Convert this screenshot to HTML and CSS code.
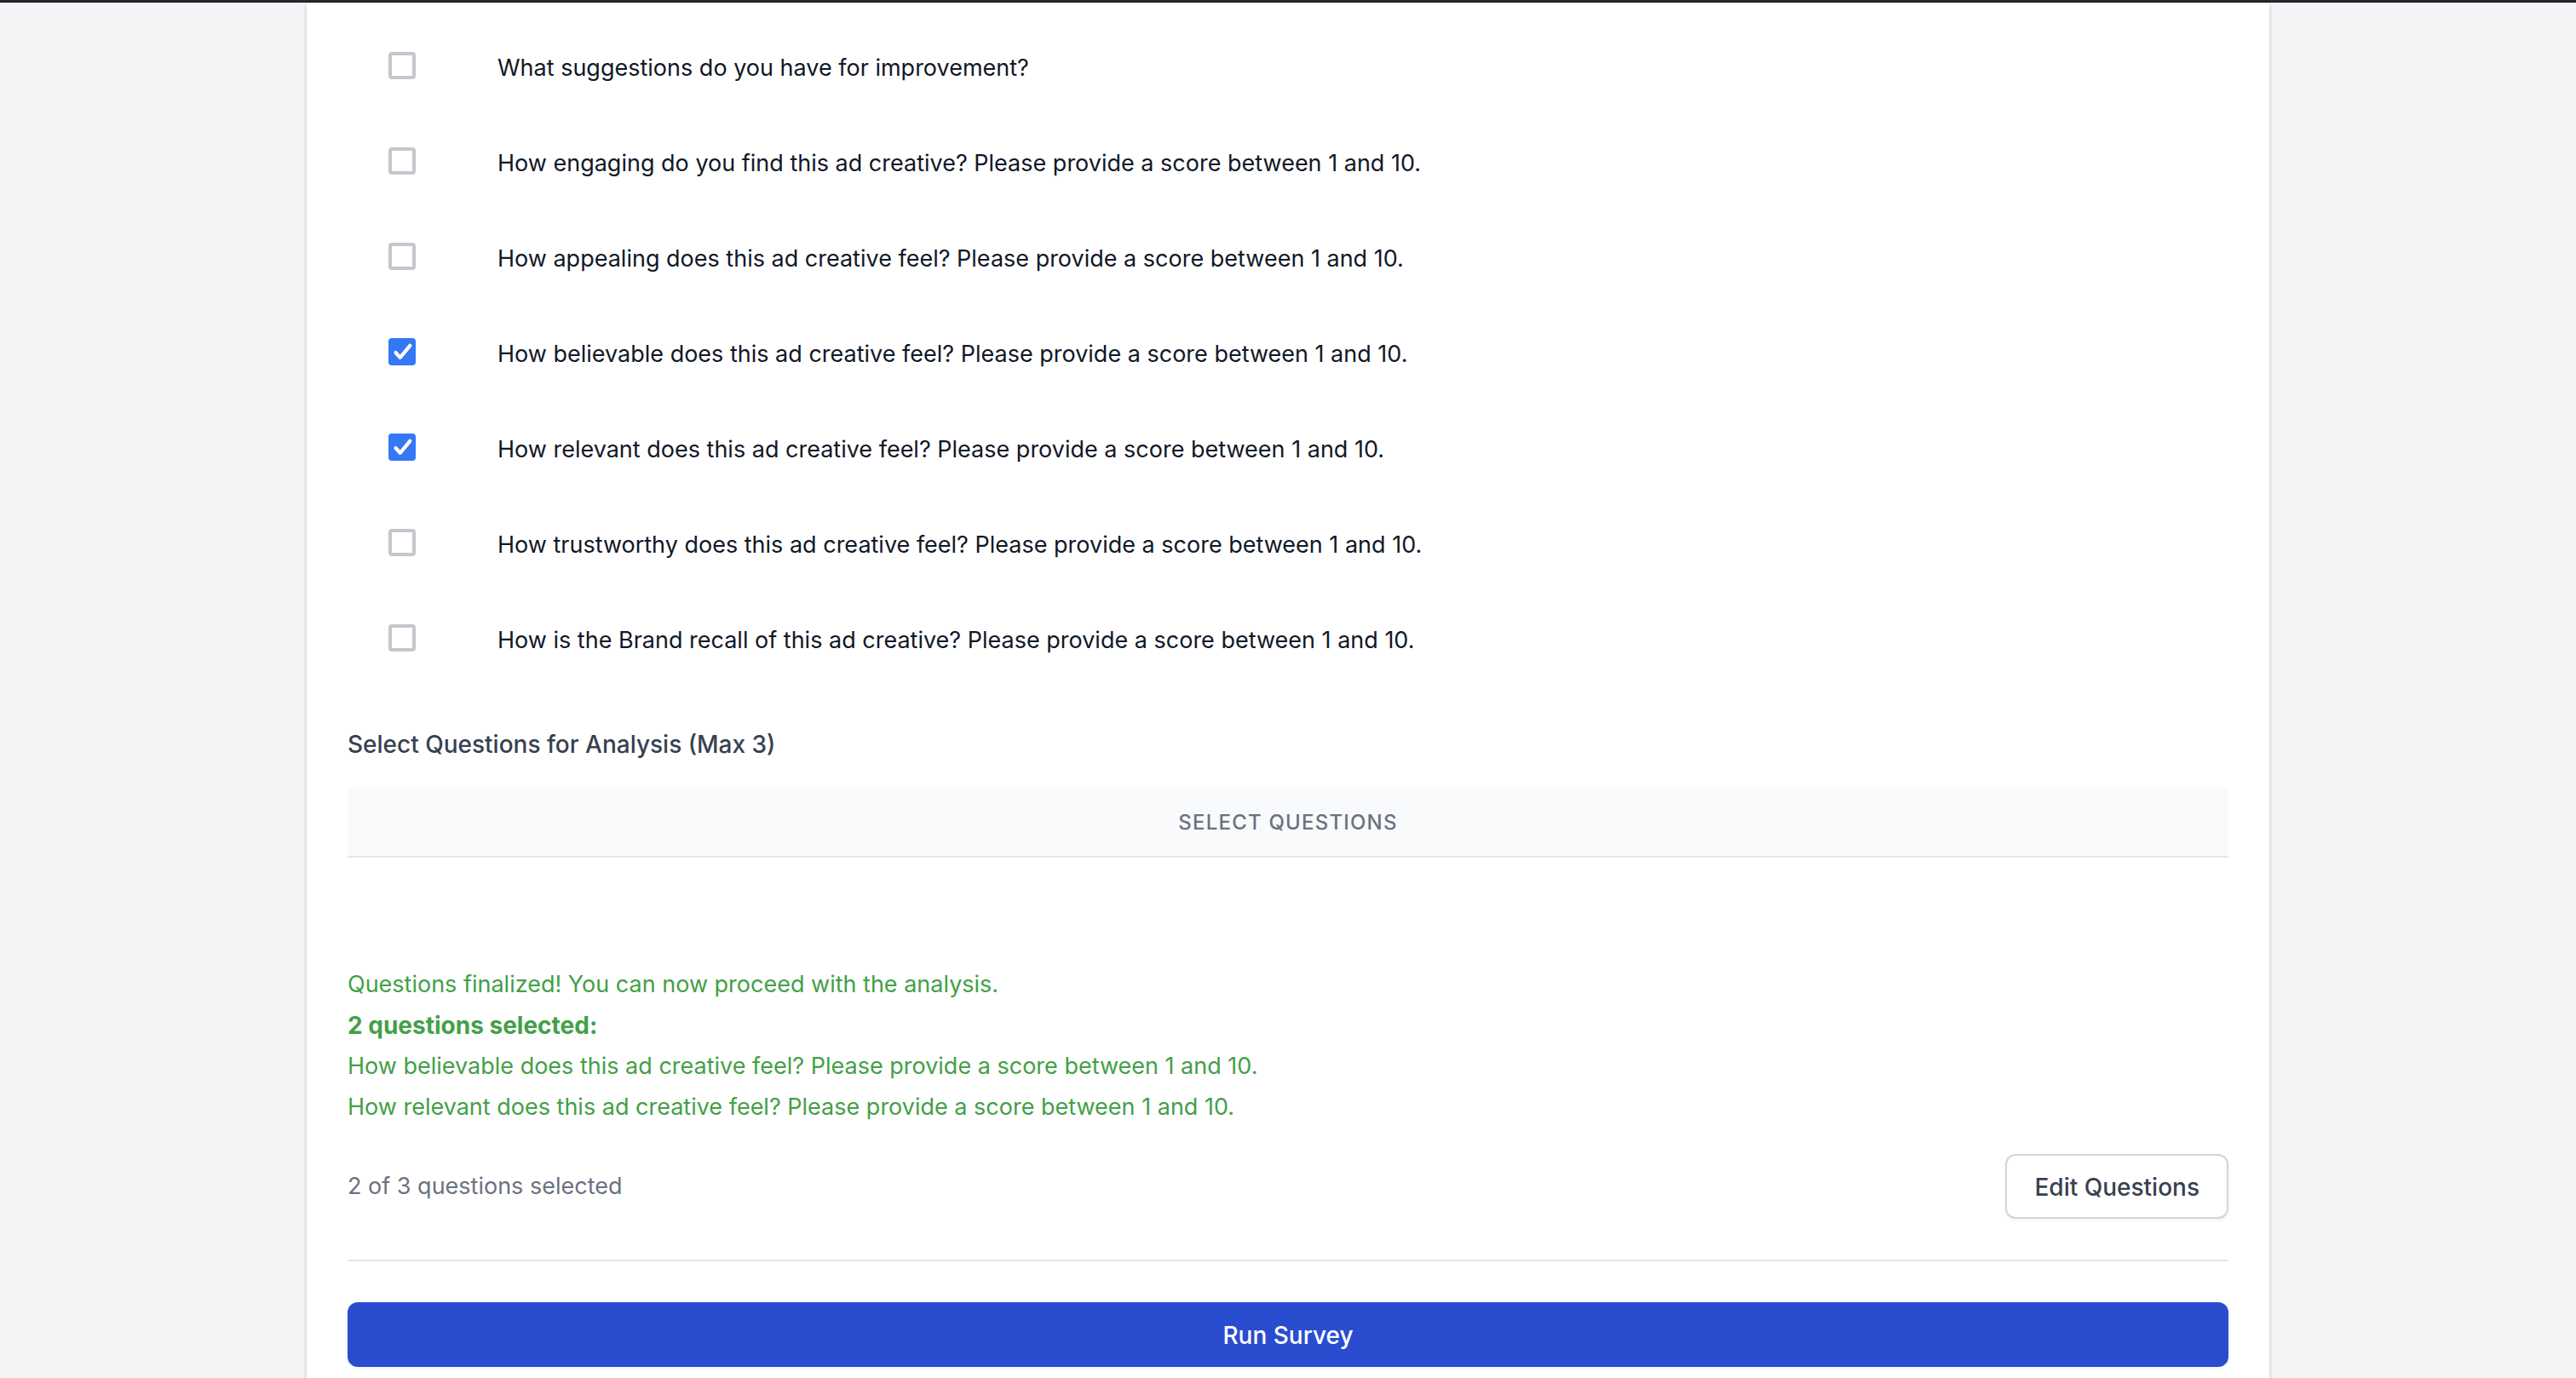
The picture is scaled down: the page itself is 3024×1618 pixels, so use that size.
FILE: index.html
```html
<!DOCTYPE html>
<html lang="en">
<head>
<meta charset="utf-8">
<title>Survey Questions</title>
<link rel="stylesheet" href="styles.css">
</head>
<body>
<div class="topbar"></div>
<main class="card">
  <table class="questions">
    <tbody>
      <tr><td class="pick"><input class="check" type="checkbox" id="q1"></td><td><label for="q1">What suggestions do you have for improvement?</label></td></tr>
      <tr><td class="pick"><input class="check" type="checkbox" id="q2"></td><td><label for="q2">How engaging do you find this ad creative? Please provide a score between 1 and 10.</label></td></tr>
      <tr><td class="pick"><input class="check" type="checkbox" id="q3"></td><td><label for="q3">How appealing does this ad creative feel? Please provide a score between 1 and 10.</label></td></tr>
      <tr><td class="pick"><input class="check" type="checkbox" id="q4" checked></td><td><label for="q4">How believable does this ad creative feel? Please provide a score between 1 and 10.</label></td></tr>
      <tr><td class="pick"><input class="check" type="checkbox" id="q5" checked></td><td><label for="q5">How relevant does this ad creative feel? Please provide a score between 1 and 10.</label></td></tr>
      <tr><td class="pick"><input class="check" type="checkbox" id="q6"></td><td><label for="q6">How trustworthy does this ad creative feel? Please provide a score between 1 and 10.</label></td></tr>
      <tr><td class="pick"><input class="check" type="checkbox" id="q7"></td><td><label for="q7">How is the Brand recall of this ad creative? Please provide a score between 1 and 10.</label></td></tr>
    </tbody>
  </table>

  <h2 class="heading">Select Questions for Analysis (Max 3)</h2>
  <div class="table-head">Select Questions</div>

  <div class="status">
    <p>Questions finalized! You can now proceed with the analysis.</p>
    <p><strong>2 questions selected:</strong></p>
    <p>How believable does this ad creative feel? Please provide a score between 1 and 10.</p>
    <p>How relevant does this ad creative feel? Please provide a score between 1 and 10.</p>
  </div>

  <div class="summary">
    <span>2 of 3 questions selected</span>
    <button class="button" type="button">Edit Questions</button>
  </div>

  <div class="actions">
    <button class="button button-primary" type="button">Run Survey</button>
  </div>
</main>
</body>
</html>
```
FILE: styles.css
```css
*,
*::before,
*::after {
  box-sizing: border-box;
}

body {
  display: flex;
  flex-direction: column;
  min-height: 100vh;
  margin: 0;
  background: #f3f4f6;
  color: #111827;
  font-family: Inter, "Liberation Sans", sans-serif;
  font-size: 27px;
  line-height: 40px;
}

.topbar {
  height: 3px;
  background: #2b2932;
  border-bottom: 1px solid #08080c;
}

.card {
  flex: 1;
  width: 100%;
  max-width: 2304px;
  margin: 0 auto;
  padding: 20px 48px 12px;
  background: #fff;
  box-shadow: 0 2px 6px rgba(0, 0, 0, 0.1), 0 2px 4px rgba(0, 0, 0, 0.1);
}

.questions {
  width: 100%;
  border-collapse: collapse;
}

.questions td {
  height: 112px;
  padding: 2px 48px 0;
  vertical-align: middle;
}

.questions .pick {
  width: 128px;
  padding: 0 48px 4px;
}

.check {
  display: block;
  appearance: none;
  width: 32px;
  height: 32px;
  margin: 0;
  border: 4px solid #c7c6cd;
  border-radius: 4px;
  background: #fff;
}

.check:checked {
  border: 0;
  background: #3478f6 url("data:image/svg+xml,%3Csvg xmlns='http://www.w3.org/2000/svg' viewBox='0 0 32 32'%3E%3Cpath d='M8.500 17l5.200 5.800L25.300 8.800' fill='none' stroke='white' stroke-width='4.200' stroke-linecap='round' stroke-linejoin='round'/%3E%3C/svg%3E") center / 100% no-repeat;
}

.heading {
  margin: 47px 0 31px;
  color: #374151;
  font-size: 28px;
  font-weight: 500;
  line-height: 40px;
}

.table-head {
  padding: 25px 48px 23px;
  border-bottom: 2px solid #e5e7eb;
  background: #f9fafb;
  color: #6b7280;
  font-size: 24px;
  font-weight: 500;
  line-height: 32px;
  letter-spacing: 0.05em;
  text-align: center;
  text-transform: uppercase;
}

.status {
  margin-top: 125px;
  color: #43a047;
  line-height: 48px;
}

.status p {
  margin: 0;
}

.status strong {
  display: block;
  font-size: 28px;
}

.summary {
  display: flex;
  align-items: center;
  justify-content: space-between;
  margin-top: 31px;
  color: #6b7280;
}

.button {
  padding: 17px 32px 15px;
  border: 2px solid #d1d5db;
  border-radius: 12px;
  background: #fff;
  box-shadow: 0 2px 4px rgba(0, 0, 0, 0.05);
  color: #374151;
  font: inherit;
  font-size: 28px;
  font-weight: 500;
  cursor: pointer;
}

.actions {
  margin-top: 48px;
  padding-top: 48px;
  border-top: 2px solid #e5e7eb;
}

.button-primary {
  display: block;
  width: 100%;
  border-color: #2a4dd0;
  background: #2a4dd0;
  color: #fff;
}
```
